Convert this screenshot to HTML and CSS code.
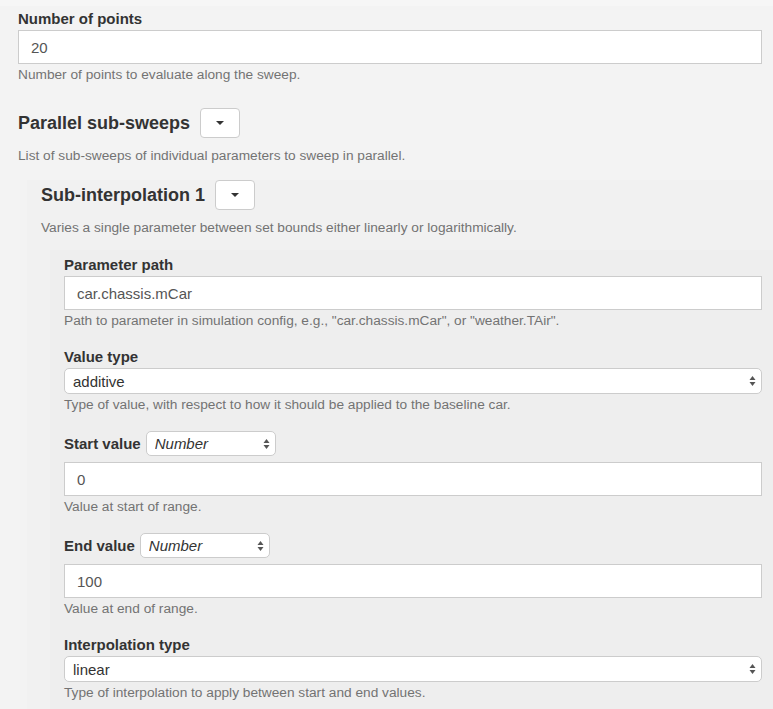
FILE: index.html
```html
<!DOCTYPE html>
<html lang="en">
<head>
    <meta charset="UTF-8">
    <meta name="viewport" content="width=device-width, initial-scale=1.0">
    <title>Sweep settings</title>
    <link rel="stylesheet" href="styles.css">
</head>
<body>
<div class="well well-outer">
    <div class="form-group">
        <label class="control-label">Number of points</label>
        <input type="text" class="form-control" value="20">
        <p class="help-block">Number of points to evaluate along the sweep.</p>
    </div>

    <div class="section-head">
        <h3>Parallel sub-sweeps</h3>
        <button class="btn-toggle"><span class="caret"></span></button>
    </div>
    <p class="help-block section-help">List of sub-sweeps of individual parameters to sweep in parallel.</p>

    <div class="well well-nested">
        <div class="section-head">
            <h3>Sub-interpolation 1</h3>
            <button class="btn-toggle"><span class="caret"></span></button>
        </div>
        <p class="help-block section-help">Varies a single parameter between set bounds either linearly or logarithmically.</p>

        <div class="well well-inner">
            <div class="form-group">
                <label class="control-label">Parameter path</label>
                <input type="text" class="form-control" value="car.chassis.mCar">
                <p class="help-block">Path to parameter in simulation config, e.g., "car.chassis.mCar", or "weather.TAir".</p>
            </div>

            <div class="form-group">
                <label class="control-label">Value type</label>
                <div class="select-wrap">
                    <select class="form-select">
                        <option>additive</option>
                        <option>multiplicative</option>
                        <option>absolute</option>
                    </select>
                    <svg class="select-arrows" width="7" height="12" viewBox="0 0 7 12"><path d="M0.5 5L3.5 1L6.5 5Z M0.5 7L3.5 11L6.5 7Z" fill="#555"/></svg>
                </div>
                <p class="help-block">Type of value, with respect to how it should be applied to the baseline car.</p>
            </div>

            <div class="form-group">
                <div class="value-row">
                    <label class="control-label">Start value</label>
                    <div class="select-wrap select-small">
                        <select class="form-select type-select">
                            <option>Number</option>
                            <option>Expression</option>
                        </select>
                        <svg class="select-arrows" width="7" height="12" viewBox="0 0 7 12"><path d="M0.5 5L3.5 1L6.5 5Z M0.5 7L3.5 11L6.5 7Z" fill="#555"/></svg>
                    </div>
                </div>
                <input type="text" class="form-control" value="0">
                <p class="help-block">Value at start of range.</p>
            </div>

            <div class="form-group">
                <div class="value-row">
                    <label class="control-label">End value</label>
                    <div class="select-wrap select-small">
                        <select class="form-select type-select">
                            <option>Number</option>
                            <option>Expression</option>
                        </select>
                        <svg class="select-arrows" width="7" height="12" viewBox="0 0 7 12"><path d="M0.5 5L3.5 1L6.5 5Z M0.5 7L3.5 11L6.5 7Z" fill="#555"/></svg>
                    </div>
                </div>
                <input type="text" class="form-control" value="100">
                <p class="help-block">Value at end of range.</p>
            </div>

            <div class="form-group">
                <label class="control-label">Interpolation type</label>
                <div class="select-wrap">
                    <select class="form-select">
                        <option>linear</option>
                        <option>logarithmic</option>
                    </select>
                    <svg class="select-arrows" width="7" height="12" viewBox="0 0 7 12"><path d="M0.5 5L3.5 1L6.5 5Z M0.5 7L3.5 11L6.5 7Z" fill="#555"/></svg>
                </div>
                <p class="help-block">Type of interpolation to apply between start and end values.</p>
            </div>
        </div>
    </div>
</div>
</body>
</html>
```

FILE: styles.css
```css
body {
    margin: 0;
    background: #f6f6f6;
    font-family: "Liberation Sans", Arial, sans-serif;
    font-size: 14px;
    line-height: 20px;
    color: #333;
}

.well {
    background: #f3f3f3;
}

.well-outer {
    margin-top: 6px;
    padding: 3px 11px 0 18px;
}

.well-nested {
    margin: 14px -11px 0 9px;
    padding: 0 11px 0 14px;
    background: #f1f1f1;
}

.well-inner {
    margin: 12px -11px 0 9px;
    padding: 5px 11px 6px 14px;
    background: #eeeeee;
}

.form-group {
    margin-bottom: 16px;
}

.form-group:last-child {
    margin-bottom: 0;
}

.control-label {
    display: block;
    margin-bottom: 1px;
    font-size: 15px;
    font-weight: bold;
    line-height: 20px;
    color: #333;
}

.form-control {
    display: block;
    box-sizing: border-box;
    width: 100%;
    height: 34px;
    margin: 0;
    padding: 6px 12px;
    border: 1px solid #ccc;
    border-radius: 0;
    background: #fff;
    font-family: inherit;
    font-size: 15px;
    color: #555;
    outline: none;
}

.help-block {
    margin: 1px 0 0;
    font-size: 13.7px;
    line-height: 20px;
    color: #737373;
}

.section-head {
    display: flex;
    align-items: center;
    gap: 10px;
    height: 30px;
}

.form-group + .section-head {
    margin-top: 23px;
}

.section-head h3 {
    margin: 0;
    font-size: 18px;
    font-weight: bold;
    line-height: 30px;
    color: #333;
}

.btn-toggle {
    display: flex;
    align-items: center;
    justify-content: center;
    box-sizing: border-box;
    width: 40px;
    height: 30px;
    padding: 0;
    background: #fff;
    border: 1px solid #ccc;
    border-radius: 4px;
    cursor: pointer;
}

.caret {
    width: 0;
    height: 0;
    border-top: 4px solid #333;
    border-left: 4px solid transparent;
    border-right: 4px solid transparent;
}

.section-help {
    margin-top: 8px;
}

.select-wrap {
    position: relative;
}

.form-select {
    display: block;
    box-sizing: border-box;
    width: 100%;
    height: 26px;
    margin: 0;
    padding: 0 24px 0 8px;
    background: #fff;
    border: 1px solid #ccc;
    border-radius: 5px;
    font-family: inherit;
    font-size: 15px;
    color: #333;
    appearance: none;
    -webkit-appearance: none;
    outline: none;
}

.select-arrows {
    position: absolute;
    top: 7px;
    right: 6px;
    pointer-events: none;
}

.value-row {
    display: flex;
    align-items: center;
    gap: 5px;
    margin-bottom: 6px;
}

.value-row .control-label {
    margin-bottom: 0;
}

.select-small {
    width: 130px;
}

.type-select {
    height: 25px;
    font-style: italic;
}
```
